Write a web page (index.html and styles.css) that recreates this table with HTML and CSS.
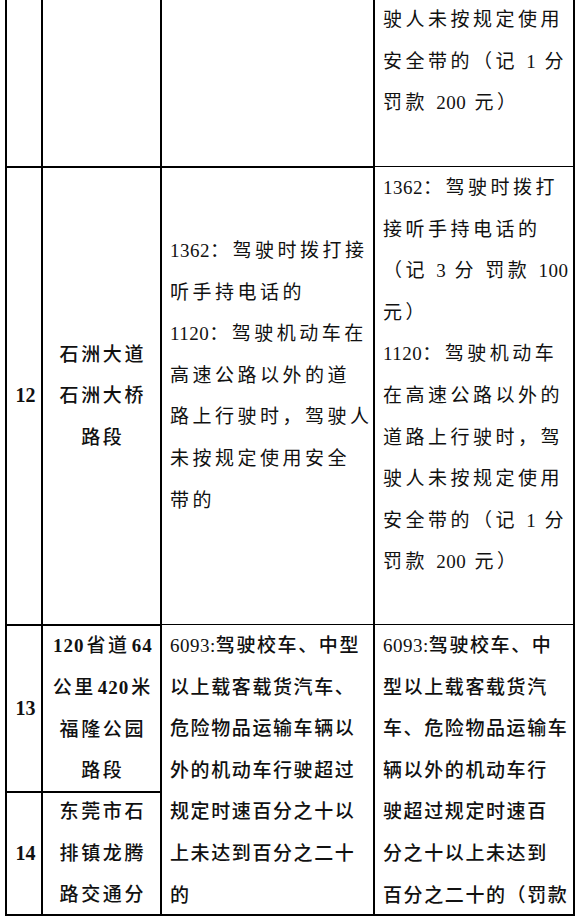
FILE: index.html
```html
<!DOCTYPE html>
<html lang="zh-CN">
<head>
<meta charset="utf-8">
<title>违法行为表</title>
<link rel="stylesheet" href="styles.css">
</head>
<body>
<div class="table">
  <div class="cell"></div>
  <div class="cell"></div>
  <div class="cell"></div>
  <div class="cell text wide first">
    <span class="ln">驶人未按规定使用</span>
    <span class="ln">安全带的（记 <span class="num">1</span> 分</span>
    <span class="ln">罚款 <span class="num">200</span> 元）</span>
  </div>

  <div class="cell no"><span class="b">12</span></div>
  <div class="cell place">
    <span class="ln">石洲大道</span>
    <span class="ln">石洲大桥</span>
    <span class="ln">路段</span>
  </div>
  <div class="cell text wide mid">
    <span class="ln"><span class="num">1362</span>：驾驶时拨打接</span>
    <span class="ln">听手持电话的</span>
    <span class="ln"><span class="num">1120</span>：驾驶机动车在</span>
    <span class="ln">高速公路以外的道</span>
    <span class="ln">路上行驶时，驾驶人</span>
    <span class="ln">未按规定使用安全</span>
    <span class="ln">带的</span>
  </div>
  <div class="cell text wide first">
    <span class="ln"><span class="num">1362</span>：驾驶时拨打</span>
    <span class="ln">接听手持电话的</span>
    <span class="ln">（记 <span class="num">3</span> 分 罚款 <span class="num">100</span></span>
    <span class="ln">元）</span>
    <span class="ln"><span class="num">1120</span>：驾驶机动车</span>
    <span class="ln">在高速公路以外的</span>
    <span class="ln">道路上行驶时，驾</span>
    <span class="ln">驶人未按规定使用</span>
    <span class="ln">安全带的（记 <span class="num">1</span> 分</span>
    <span class="ln">罚款 <span class="num">200</span> 元）</span>
  </div>

  <div class="cell no"><span class="b">13</span></div>
  <div class="cell place">
    <span class="ln"><span class="num">120</span>省道<span class="num">64</span></span>
    <span class="ln">公里<span class="num">420</span>米</span>
    <span class="ln">福隆公园</span>
    <span class="ln">路段</span>
  </div>
  <div class="cell text tight span2 col3 first">
    <span class="ln"><span class="num">6093:</span>驾驶校车、中型</span>
    <span class="ln">以上载客载货汽车、</span>
    <span class="ln">危险物品运输车辆以</span>
    <span class="ln">外的机动车行驶超过</span>
    <span class="ln">规定时速百分之十以</span>
    <span class="ln">上未达到百分之二十</span>
    <span class="ln">的</span>
  </div>
  <div class="cell text tight span2 col4 first">
    <span class="ln"><span class="num">6093:</span>驾驶校车、中</span>
    <span class="ln">型以上载客载货汽</span>
    <span class="ln">车、危险物品运输车</span>
    <span class="ln">辆以外的机动车行</span>
    <span class="ln">驶超过规定时速百</span>
    <span class="ln">分之十以上未达到</span>
    <span class="ln">百分之二十的（罚款</span>
  </div>

  <div class="cell no"><span class="b">14</span></div>
  <div class="cell place">
    <span class="ln">东莞市石</span>
    <span class="ln">排镇龙腾</span>
    <span class="ln">路交通分</span>
  </div>
</div>
</body>
</html>
```

FILE: styles.css
```css
html, body {
  margin: 0;
  padding: 0;
  background: #fff;
}

.table {
  display: grid;
  width: 570px;
  margin-left: 5px;
  grid-template-columns: 34px 117px 211px 198px;
  grid-template-rows: 166px 456px 165px 121px;
  gap: 2px;
  padding: 0 2px 2px;
  box-sizing: border-box;
  background: #000;
  font-family: "Liberation Serif", "Noto Sans CJK SC", serif;
  font-size: 19px;
  line-height: 41.6px;
  color: #111;
}

.cell {
  background: #fff;
  overflow: hidden;
  min-width: 0;
}

.ln {
  display: block;
  white-space: nowrap;
}

.num {
  letter-spacing: 0.5px;
  font-family: "Liberation Serif", serif;
}

.text {
  padding-left: 8px;
  font-weight: 400;
}

.wide {
  letter-spacing: 3.5px;
}

.tight {
  letter-spacing: 1.6px;
  font-weight: 500;
}

.first {
  margin-top: -1px;
}

.mid {
  padding-top: 62px;
}

.span2 {
  grid-row: 3 / span 2;
}

.col3 {
  grid-column: 3;
}

.col4 {
  grid-column: 4;
}

.no {
  display: flex;
  align-items: center;
  justify-content: center;
  font-weight: 700;
  font-size: 20px;
  padding-left: 3px;
}

.place {
  display: flex;
  flex-direction: column;
  align-items: center;
  justify-content: center;
  letter-spacing: 2.6px;
  font-weight: 500;
  text-indent: 2.6px;
}

.place .num {
  font-weight: 700;
  letter-spacing: 1px;
  margin: 0 2px;
}
```
